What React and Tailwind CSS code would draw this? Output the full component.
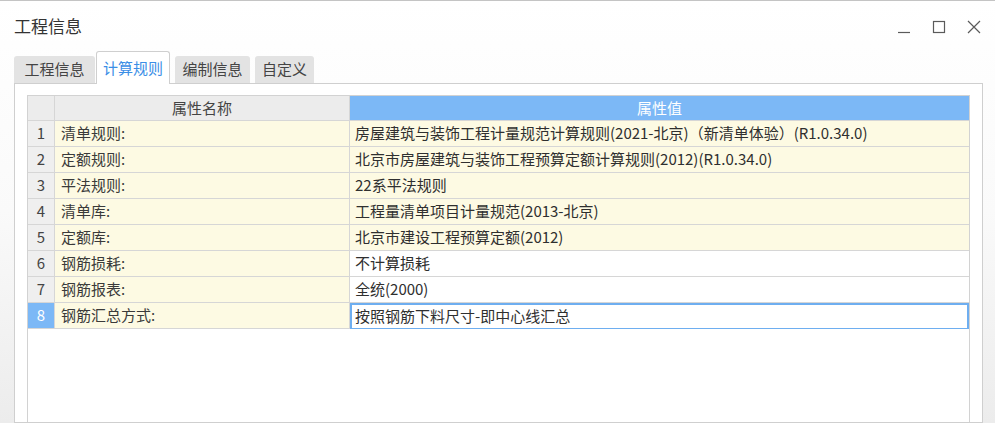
import React from "react";

const rows = [
  { id: 1, name: "清单规则:", value: "房屋建筑与装饰工程计量规范计算规则(2021-北京)（新清单体验）(R1.0.34.0)", locked: true },
  { id: 2, name: "定额规则:", value: "北京市房屋建筑与装饰工程预算定额计算规则(2012)(R1.0.34.0)", locked: true },
  { id: 3, name: "平法规则:", value: "22系平法规则", locked: true },
  { id: 4, name: "清单库:", value: "工程量清单项目计量规范(2013-北京)", locked: true },
  { id: 5, name: "定额库:", value: "北京市建设工程预算定额(2012)", locked: true },
  { id: 6, name: "钢筋损耗:", value: "不计算损耗", locked: false },
  { id: 7, name: "钢筋报表:", value: "全统(2000)", locked: false },
  { id: 8, name: "钢筋汇总方式:", value: "按照钢筋下料尺寸-即中心线汇总", locked: false },
];

const tabs = [
  { label: "工程信息", w: "w-[81px]" },
  { label: "计算规则", w: "w-[74px]", active: true },
  { label: "编制信息", w: "w-[75px]" },
  { label: "自定义", w: "w-[59px]" },
];

function WindowControls() {
  return (
    <div className="flex items-center gap-[21px] mr-[14px] mt-[2px] text-[#5a5a5a]">
      <svg width="14" height="14" viewBox="0 0 14 14" className="ml-[2px]">
        <line x1="1" y1="12.5" x2="13" y2="12.5" stroke="currentColor" strokeWidth="1.2" />
      </svg>
      <svg width="14" height="14" viewBox="0 0 14 14">
        <rect x="1.5" y="1.5" width="11" height="11" fill="none" stroke="currentColor" strokeWidth="1.2" />
      </svg>
      <svg width="14" height="14" viewBox="0 0 14 14">
        <path d="M1 1 L13 13 M13 1 L1 13" stroke="currentColor" strokeWidth="1.2" />
      </svg>
    </div>
  );
}

export default function App() {
  return (
    <div
      className="w-[995px] h-[423px] overflow-hidden flex flex-col border-t border-[#c4c4c4] bg-gradient-to-b from-white via-[#fafafa] to-[#ececec] text-[#333]"
      style={{ fontFamily: '"Noto Sans CJK SC", "Noto Sans", sans-serif' }}
    >
      {/* title bar */}
      <div className="h-[50px] flex items-center justify-between shrink-0">
        <span className="pl-[14px] text-[17px] text-[#333]">工程信息</span>
        <WindowControls />
      </div>

      {/* tabs */}
      <div className="flex items-end pl-[14px] h-[33px] shrink-0 relative z-10">
        {tabs.map((t, i) =>
          t.active ? (
            <div
              key={i}
              className={`${t.w} ml-[1px] mr-[5px] h-[33px] bg-white border border-b-0 border-[#cfcfcf] rounded-t-[3px] flex items-center justify-center text-[15px] text-[#3b8ee6]`}
            >
              {t.label}
            </div>
          ) : (
            <div
              key={i}
              className={`${t.w} ${i === 2 ? "mr-[5px]" : ""} h-[27px] mb-[1px] bg-[#e3e3e3] rounded-t-[3px] flex items-center justify-center text-[15px] text-[#444]`}
            >
              {t.label}
            </div>
          )
        )}
      </div>

      {/* panel */}
      <div className="flex-1 ml-[14px] mr-[12px] -mt-[1px] bg-white border border-[#cfcfcf] pt-[11px] pl-[12px] pr-[12px] flex flex-col">
        <div className="flex-1 border border-[#d2d2d2] border-b-0 bg-white text-[15px]">
          {/* header */}
          <div className="flex h-[25px]">
            <div className="w-[27px] bg-[#ececec] border-r border-b border-[#d6d6d6]" />
            <div className="w-[295px] bg-[#ececec] border-r border-b border-[#d6d6d6] flex items-center justify-center text-[#444]">
              属性名称
            </div>
            <div className="flex-1 bg-[#7cb8f6] border-b border-[#d6d6d6] flex items-center justify-center text-white">
              属性值
            </div>
          </div>

          {rows.map((r) => {
            const selected = r.id === 8;
            return (
              <div key={r.id} className="flex h-[26px]">
                <div
                  className={`w-[27px] border-r border-b border-[#d6d6d6] flex items-center justify-center ${
                    selected ? "bg-[#7cb8f6] text-white" : "bg-[#efefef] text-[#444]"
                  }`}
                >
                  {r.id}
                </div>
                <div className="w-[295px] bg-[#fdfae3] border-r border-b border-[#d6d6d6] flex items-center pl-[6px] text-[#3a3a3a] whitespace-nowrap">
                  {r.name}
                </div>
                <div
                  className={`flex-1 border-b flex items-center whitespace-nowrap ${
                    r.locked ? "bg-[#fdfae3]" : "bg-white"
                  } ${
                    selected
                      ? "border-2 border-[#6eaef0] pl-[3px]"
                      : "border-[#d6d6d6] pl-[5px]"
                  } text-[#2f2f2f]`}
                >
                  {r.value}
                </div>
              </div>
            );
          })}
        </div>
      </div>
    </div>
  );
}
